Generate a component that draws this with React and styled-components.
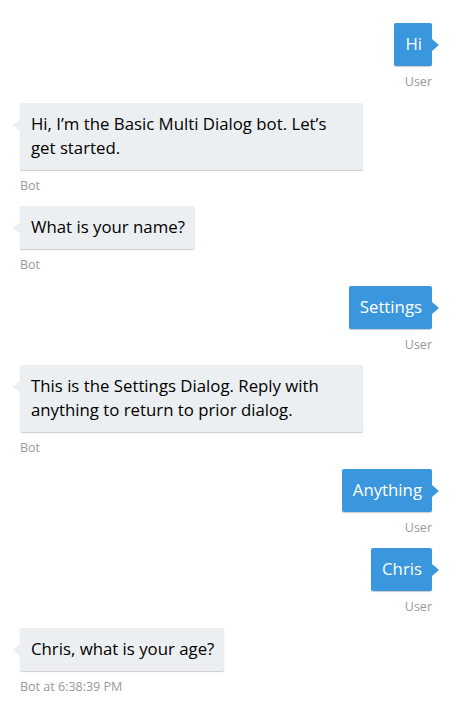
import React from "react";
import styled, { createGlobalStyle } from "styled-components";

const GlobalStyle = createGlobalStyle`
  html, body {
    margin: 0;
    padding: 0;
    background: #ffffff;
  }
  body {
    font-family: "Open Sans", "Noto Sans", sans-serif;
  }
`;

const messages = [
  { from: "user", text: "Hi", label: "User" },
  { from: "bot", text: "Hi, I\u2019m the Basic Multi Dialog bot. Let\u2019s get started.", label: "Bot" },
  { from: "bot", text: "What is your name?", label: "Bot" },
  { from: "user", text: "Settings", label: "User" },
  { from: "bot", text: "This is the Settings Dialog. Reply with anything to return to prior dialog.", label: "Bot" },
  { from: "user", text: "Anything", label: "User" },
  { from: "user", text: "Chris", label: "User" },
  { from: "bot", text: "Chris, what is your age?", label: "Bot at 6:38:39 PM" },
];

const App = () => {
  return (
    <>
      <GlobalStyle />
      <ChatLog>
        {messages.map((m, i) => (
          <MessageGroup key={i} $user={m.from === "user"}>
            <Bubble $user={m.from === "user"}>{m.text}</Bubble>
            <From>{m.label}</From>
          </MessageGroup>
        ))}
      </ChatLog>
    </>
  );
};

// Styled Components
const ChatLog = styled.div`
  display: flex;
  flex-direction: column;
  gap: 13.5px;
  padding: 23px 29px 10px 20px;
  box-sizing: border-box;
  width: 461px;
`;

const MessageGroup = styled.div`
  display: flex;
  flex-direction: column;
  align-items: ${(p) => (p.$user ? "flex-end" : "flex-start")};
`;

const Bubble = styled.div`
  position: relative;
  max-width: 343px;
  box-sizing: border-box;
  padding: 9px 10px 10px 11px;
  font-size: 16.8px;
  line-height: 24px;
  border-radius: 2px;
  background: ${(p) => (p.$user ? "#3a96dd" : "#eceff1")};
  color: ${(p) => (p.$user ? "#ffffff" : "#000000")};
  box-shadow: 0 1px 1px rgba(0, 0, 0, 0.2);

  &::before {
    content: "";
    position: absolute;
    top: 16px;
    ${(p) => (p.$user ? "right: -7px;" : "left: -7px;")}
    border-top: 6px solid transparent;
    border-bottom: 6px solid transparent;
    ${(p) =>
      p.$user
        ? "border-left: 7px solid #3a96dd;"
        : "border-right: 7px solid #eceff1;"}
  }
`;

const From = styled.div`
  margin-top: 9px;
  font-size: 12.5px;
  line-height: 14px;
  color: #999999;
`;

export default App;
